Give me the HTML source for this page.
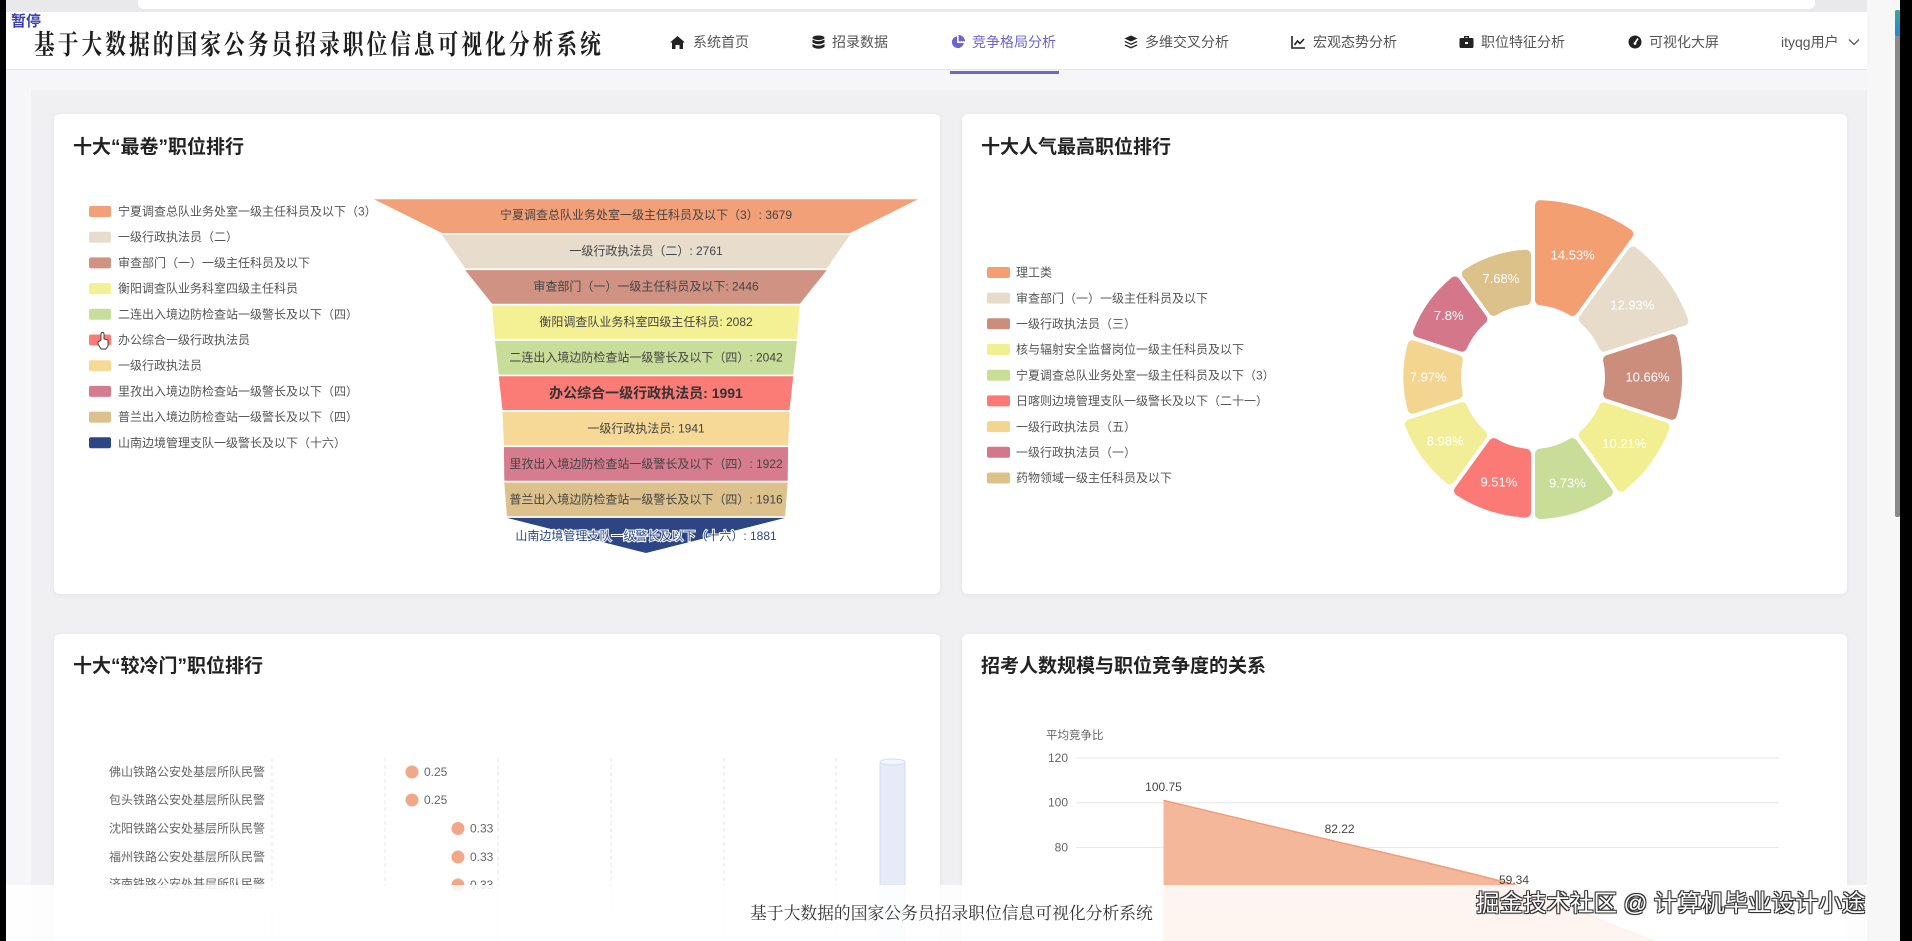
<!DOCTYPE html>
<html><head><meta charset="utf-8">
<style>
*{margin:0;padding:0;box-sizing:border-box}
html,body{width:1912px;height:941px;overflow:hidden}
body{position:relative;background:#f6f6f8;font-family:"Liberation Sans","Noto Sans CJK SC",sans-serif;color:#333}
.abs{position:absolute}
#topstrip{left:0;top:0;width:1912px;height:12px;background:#e9e9ec}
#topbar{left:138px;top:0;width:1677px;height:9px;background:#fff;border-radius:0 0 6px 6px}
#header{left:0;top:12px;width:1912px;height:58px;background:#fff;border-bottom:1px solid #e6e6e6}
#title{left:34px;top:26px;font-family:"Noto Serif CJK SC","Liberation Serif",serif;font-weight:700;font-size:27px;letter-spacing:4px;color:#1e1e1e;white-space:nowrap;line-height:34px;transform:scaleX(0.766);transform-origin:0 0}
.nav{top:32px;height:20px;font-size:14px;color:#555;white-space:nowrap;line-height:20px;display:flex;align-items:center}
.nav svg{margin-right:7px}
.nav.act{color:#6f63cc}
#uline{left:950px;top:71px;width:109px;height:3px;background:#6f63cc}
#pause{left:11px;top:13px;font-size:15px;font-weight:700;color:#3b3fb5;text-shadow:0 0 2px #fff,0 0 1px #fff;line-height:17px}
#cont{left:31px;top:90px;width:1836px;height:851px;background:#f0f0f2}
.card{background:#fff;border-radius:6px;box-shadow:0 1px 6px rgba(0,0,0,.06)}
.ct{font-size:19px;font-weight:700;color:#222;white-space:nowrap;line-height:24px}
#black-l{left:0;top:0;width:6px;height:941px;background:#000}
#black-r{left:1900px;top:0;width:12px;height:941px;background:#000}
#sbtrack{left:1867px;top:0;width:33px;height:941px;background:#f7f7f8}
#sbthumb{left:1895px;top:10px;width:5px;height:507px;background:#8a8a8a;border-radius:2px}
#footer{left:6px;top:885px;width:1894px;height:56px;background:rgba(255,255,255,.86)}
#ftext{left:750px;top:902px;font-family:"Liberation Serif","Noto Serif CJK SC",serif;font-size:16.8px;color:#333;white-space:nowrap;line-height:24px}
#wm{left:1476px;top:888px;font-size:23.5px;color:#fff;white-space:nowrap;line-height:30px;text-shadow:-1px -1px 0 #333,1px -1px 0 #333,-1px 1px 0 #333,1px 1px 0 #333,0 0 2px #000}
svg text{font-family:"Liberation Sans","Noto Sans CJK SC",sans-serif}
</style></head><body>
<div class="abs" id="topstrip"></div>
<div class="abs" id="topbar"></div>
<div class="abs" id="header"></div>
<div class="abs" id="title">基于大数据的国家公务员招录职位信息可视化分析系统</div>
<div class="abs" id="pause">暂停</div>

<div class="abs nav" style="left:669px"><svg width="17" height="15" viewBox="0 0 17 15"><path d="M8.5 1 L16 7.5 L14 7.5 L14 14 L10.5 14 L10.5 10 L6.5 10 L6.5 14 L3 14 L3 7.5 L1 7.5 Z" fill="#222"/></svg>系统首页</div>
<div class="abs nav" style="left:812px"><svg width="13" height="15" viewBox="0 0 13 15"><ellipse cx="6.5" cy="2.8" rx="6" ry="2.3" fill="#222"/><path d="M0.5 4.5 Q6.5 8 12.5 4.5 L12.5 7.5 Q6.5 11 0.5 7.5Z M0.5 9 Q6.5 12.5 12.5 9 L12.5 12 Q6.5 15.5 0.5 12Z" fill="#222"/></svg>招录数据</div>
<div class="abs nav act" style="left:951px"><svg width="14" height="14" viewBox="0 0 14 14"><path d="M6 1.2 A6 6 0 1 0 12.8 8 L6 8 Z" fill="#6f63cc"/><path d="M7.6 0 A6.4 6.4 0 0 1 14 6.4 L7.6 6.4Z" fill="#6f63cc"/></svg>竞争格局分析</div>
<div class="abs nav" style="left:1124px"><svg width="14" height="14" viewBox="0 0 14 14"><path d="M7 0.5 L13.5 3.5 L7 6.5 L0.5 3.5Z" fill="#222"/><path d="M1.5 6 L7 8.6 L12.5 6 L13.5 7 L7 10 L0.5 7Z M1.5 9.5 L7 12 L12.5 9.5 L13.5 10.5 L7 13.5 L0.5 10.5Z" fill="#222"/></svg>多维交叉分析</div>
<div class="abs nav" style="left:1291px"><svg width="15" height="14" viewBox="0 0 15 14"><path d="M1 1 L1 13 L14 13" stroke="#222" stroke-width="1.6" fill="none"/><path d="M3.5 10 L6.5 6 L9 8.5 L13 4" stroke="#222" stroke-width="1.6" fill="none"/></svg>宏观态势分析</div>
<div class="abs nav" style="left:1459px"><svg width="15" height="14" viewBox="0 0 15 14"><path d="M5 1 h5 v2 h-1.3 v-0.8 h-2.4 v0.8 h-1.3z" fill="#222"/><rect x="0.5" y="3" width="14" height="10" rx="1.5" fill="#222"/><rect x="6" y="7" width="3" height="2" fill="#fff"/></svg>职位特征分析</div>
<div class="abs nav" style="left:1628px"><svg width="14" height="14" viewBox="0 0 14 14"><circle cx="7" cy="7" r="6.5" fill="#222"/><path d="M7 8 L10 3.5" stroke="#fff" stroke-width="1.6"/><circle cx="7" cy="8.5" r="1.4" fill="#fff"/></svg>可视化大屏</div>
<div class="abs nav" style="left:1781px;font-size:14px">ityqg用户<svg style="margin-left:9px" width="12" height="8" viewBox="0 0 12 8"><path d="M1 1.5 L6 6.5 L11 1.5" stroke="#555" stroke-width="1.3" fill="none"/></svg></div>
<div class="abs" id="uline"></div>

<div class="abs" id="cont"></div>
<div class="abs card" style="left:54px;top:114px;width:886px;height:480px"></div>
<div class="abs card" style="left:962px;top:114px;width:885px;height:480px"></div>
<div class="abs card" style="left:54px;top:634px;width:886px;height:320px"></div>
<div class="abs card" style="left:962px;top:634px;width:885px;height:320px"></div>
<div class="abs ct" style="left:73px;top:136px">十大“最卷”职位排行</div>
<div class="abs ct" style="left:981px;top:136px">十大人气最高职位排行</div>
<div class="abs ct" style="left:73px;top:655px">十大“较冷门”职位排行</div>
<div class="abs ct" style="left:981px;top:655px">招考人数规模与职位竞争度的关系</div>

<svg class="abs" style="left:0;top:0" width="1912" height="941" viewBox="0 0 1912 941">
<g font-size="12" fill="#555" dominant-baseline="central">
<rect x="89" y="206" width="22" height="11" rx="2" fill="#f2a077"/><text x="118" y="211.5">宁夏调查总队业务处室一级主任科员及以下（3）</text>
<rect x="89" y="231.7" width="22" height="11" rx="2" fill="#e8dccd"/><text x="118" y="237.2">一级行政执法员（二）</text>
<rect x="89" y="257.4" width="22" height="11" rx="2" fill="#cf9283"/><text x="118" y="262.9">审查部门（一）一级主任科员及以下</text>
<rect x="89" y="283.1" width="22" height="11" rx="2" fill="#f4f094"/><text x="118" y="288.6">衡阳调查队业务科室四级主任科员</text>
<rect x="89" y="308.8" width="22" height="11" rx="2" fill="#c9dd9a"/><text x="118" y="314.3">二连出入境边防检查站一级警长及以下（四）</text>
<rect x="89" y="334.5" width="22" height="11" rx="2" fill="#fb7b76"/><text x="118" y="340">办公综合一级行政执法员</text>
<rect x="89" y="360.2" width="22" height="11" rx="2" fill="#f6d897"/><text x="118" y="365.7">一级行政执法员</text>
<rect x="89" y="385.9" width="22" height="11" rx="2" fill="#d67c8e"/><text x="118" y="391.4">里孜出入境边防检查站一级警长及以下（四）</text>
<rect x="89" y="411.6" width="22" height="11" rx="2" fill="#dcc18d"/><text x="118" y="417.1">普兰出入境边防检查站一级警长及以下（四）</text>
<rect x="89" y="437.3" width="22" height="11" rx="2" fill="#2b4585"/><text x="118" y="442.8">山南边境管理支队一级警长及以下（十六）</text>
</g>
<path d="M101 340 v-6 a1.5 1.5 0 0 1 3 0 v5 l4 1 v6 l-2 3 h-5 l-3 -5 v-2 z" fill="#fff" stroke="#333" stroke-width="0.9"/>
<g>
<polygon points="374,199.3 918,199.3 850.1,233 441.9,233" fill="#f2a077"/>
<polygon points="441.9,234.7 850.1,234.7 826.8,268.4 465.2,268.4" fill="#e8dccd"/>
<polygon points="465.2,270.1 826.8,270.1 799.9,303.8 492.1,303.8" fill="#cf9283"/>
<polygon points="492.1,305.5 799.9,305.5 797,339.2 495,339.2" fill="#f4f094"/>
<polygon points="495,340.9 797,340.9 793.2,374.6 498.8,374.6" fill="#c9dd9a"/>
<polygon points="498.8,376.3 793.2,376.3 789.5,410 502.5,410" fill="#fb7b76"/>
<polygon points="502.5,411.7 789.5,411.7 788.1,445.4 503.9,445.4" fill="#f6d897"/>
<polygon points="503.9,447.1 788.1,447.1 787.7,480.8 504.3,480.8" fill="#d67c8e"/>
<polygon points="504.3,482.5 787.7,482.5 785.1,516.2 506.9,516.2" fill="#dcc18d"/>
<polygon points="506.9,517.9 785.1,517.9 646,553" fill="#2b4585"/>
</g>
<g font-size="12" fill="#444" text-anchor="middle" dominant-baseline="central">
<text x="646" y="215">宁夏调查总队业务处室一级主任科员及以下（3）: 3679</text>
<text x="646" y="251">一级行政执法员（二）: 2761</text>
<text x="646" y="286.5">审查部门（一）一级主任科员及以下: 2446</text>
<text x="646" y="322">衡阳调查队业务科室四级主任科员: 2082</text>
<text x="646" y="357.5">二连出入境边防检查站一级警长及以下（四）: 2042</text>
<text x="646" y="393" font-size="14" font-weight="700" fill="#333">办公综合一级行政执法员: 1991</text>
<text x="646" y="428.5">一级行政执法员: 1941</text>
<text x="646" y="464">里孜出入境边防检查站一级警长及以下（四）: 1922</text>
<text x="646" y="499.5">普兰出入境边防检查站一级警长及以下（四）: 1916</text>
<text x="646" y="536" fill="#2b4585" stroke="#fff" stroke-width="2" paint-order="stroke">山南边境管理支队一级警长及以下（十六）: 1881</text>
</g>
<g font-size="12" fill="#555" dominant-baseline="central">
<rect x="987" y="267" width="23" height="11" rx="2" fill="#f39f72"/><text x="1016" y="272.7">理工类</text>
<rect x="987" y="292.6" width="23" height="11" rx="2" fill="#e7dcca"/><text x="1016" y="298.3">审查部门（一）一级主任科员及以下</text>
<rect x="987" y="318.3" width="23" height="11" rx="2" fill="#cc8e7c"/><text x="1016" y="324">一级行政执法员（三）</text>
<rect x="987" y="344" width="23" height="11" rx="2" fill="#f2ef93"/><text x="1016" y="349.7">核与辐射安全监督岗位一级主任科员及以下</text>
<rect x="987" y="369.7" width="23" height="11" rx="2" fill="#c7dd98"/><text x="1016" y="375.4">宁夏调查总队业务处室一级主任科员及以下（3）</text>
<rect x="987" y="395.4" width="23" height="11" rx="2" fill="#fb7a76"/><text x="1016" y="401.1">日喀则边境管理支队一级警长及以下（二十一）</text>
<rect x="987" y="421.1" width="23" height="11" rx="2" fill="#f3d58f"/><text x="1016" y="426.8">一级行政执法员（五）</text>
<rect x="987" y="446.8" width="23" height="11" rx="2" fill="#d5778a"/><text x="1016" y="452.5">一级行政执法员（一）</text>
<rect x="987" y="472.5" width="23" height="11" rx="2" fill="#dcc18b"/><text x="1016" y="478.2">药物领域一级主任科员及以下</text>
</g>
<g id="donut"></g>
<g font-size="13" fill="#fff" text-anchor="middle" dominant-baseline="central">
<text x="1572.7" y="254.8">14.53%</text>
<text x="1632.3" y="304.9">12.93%</text>
<text x="1647.5" y="377">10.66%</text>
<text x="1624.3" y="443.4">10.21%</text>
<text x="1567.4" y="482.8">9.73%</text>
<text x="1498.9" y="482">9.51%</text>
<text x="1445.2" y="440.8">8.98%</text>
<text x="1428.2" y="377">7.97%</text>
<text x="1448.7" y="315.7">7.8%</text>
<text x="1500.9" y="278.3">7.68%</text>
</g>
<g stroke="#e4e4e4" stroke-dasharray="4 3" stroke-width="1">
<line x1="272" y1="758" x2="272" y2="941"/><line x1="385" y1="758" x2="385" y2="941"/><line x1="498" y1="758" x2="498" y2="941"/><line x1="611" y1="758" x2="611" y2="941"/><line x1="724" y1="758" x2="724" y2="941"/><line x1="836" y1="758" x2="836" y2="941"/>
</g>
<rect x="880" y="762" width="25" height="190" fill="#e5ecf8" stroke="#d3ddef"/>
<ellipse cx="892.5" cy="762" rx="12.5" ry="3" fill="#f2f5fb" stroke="#d3ddef"/>
<g font-size="12" fill="#666" text-anchor="end" dominant-baseline="central">
<text x="265" y="772">佛山铁路公安处基层所队民警</text>
<text x="265" y="800">包头铁路公安处基层所队民警</text>
<text x="265" y="828.5">沈阳铁路公安处基层所队民警</text>
<text x="265" y="857">福州铁路公安处基层所队民警</text>
<text x="265" y="884">济南铁路公安处基层所队民警</text>
</g>
<g fill="#f0a888"><circle cx="412" cy="772" r="6.5"/><circle cx="412" cy="800" r="6.5"/><circle cx="458" cy="828.5" r="6.5"/><circle cx="458" cy="857" r="6.5"/><circle cx="458" cy="885" r="6.5"/></g>
<g font-size="12" fill="#666" dominant-baseline="central">
<text x="424" y="772">0.25</text><text x="424" y="800">0.25</text><text x="470" y="828.5">0.33</text><text x="470" y="857">0.33</text><text x="470" y="885">0.33</text>
</g>
<g stroke="#e6e6e6"><line x1="1076" y1="758" x2="1779" y2="758"/><line x1="1076" y1="802.7" x2="1779" y2="802.7"/><line x1="1076" y1="847.4" x2="1779" y2="847.4"/><line x1="1076" y1="892" x2="1779" y2="892"/></g>
<g font-size="12" fill="#666" text-anchor="end" dominant-baseline="central">
<text x="1068" y="758">120</text><text x="1068" y="802.7">100</text><text x="1068" y="847.4">80</text>
</g>
<text x="1046" y="736" font-size="11.5" fill="#666" dominant-baseline="central">平均竞争比</text>
<path d="M1163.5 800.3 L1339.6 842.4 Q1460 870 1514 884.6 L1700 960 L1163.5 960 Z" fill="#f5b79a"/>
<path d="M1163.5 800.3 L1339.6 842.4 Q1460 870 1514 884.6 L1700 960" fill="none" stroke="#ee9f7c" stroke-width="1.5"/>
<g font-size="12" fill="#444" text-anchor="middle" dominant-baseline="central">
<text x="1163.5" y="787">100.75</text><text x="1339.6" y="829">82.22</text><text x="1514" y="880">59.34</text>
</g>
</svg>

<div class="abs" id="footer"></div>
<div class="abs" id="ftext">基于大数据的国家公务员招录职位信息可视化分析系统</div>
<div class="abs" id="wm">掘金技术社区 @ 计算机毕业设计小途</div>
<div class="abs" id="sbtrack"></div>
<div class="abs" id="sbthumb"></div>
<div class="abs" style="left:1895px;top:10px;width:5px;height:26px;background:linear-gradient(#3a9,#28c);border-radius:2px"></div>
<div class="abs" id="black-l"></div>
<div class="abs" id="black-r"></div>
<script>
(function(){
var cx=1533,cy=377,r0=72,vals=[14.53,12.93,10.66,10.21,9.73,9.51,8.98,7.97,7.8,7.68];
var cols=["#f39f72","#e7dcca","#cc8e7c","#f2ef93","#c7dd98","#fb7a76","#f1ee97","#f3d58f","#d5778a","#dcc18b"];
var g=document.getElementById("donut"),s="";
function P(r,a){a=a*Math.PI/180;return (cx+r*Math.sin(a)).toFixed(1)+" "+(cy-r*Math.cos(a)).toFixed(1);}
for(var k=0;k<10;k++){
 var R=72+105*vals[k]/14.53-5,ri=r0+5,a0=36*k,a1=36*k+36;
 var oi=7/ri*180/Math.PI,oo=7/R*180/Math.PI;
 var d="M"+P(R,a0+oo)+" A"+R+" "+R+" 0 0 1 "+P(R,a1-oo)+" L"+P(ri,a1-oi)+" A"+ri+" "+ri+" 0 0 0 "+P(ri,a0+oi)+" Z";
 s+='<path d="'+d+'" fill="'+cols[k]+'" stroke="'+cols[k]+'" stroke-width="10" stroke-linejoin="round"/>';
}
g.innerHTML=s;
})();
</script>
</body></html>
